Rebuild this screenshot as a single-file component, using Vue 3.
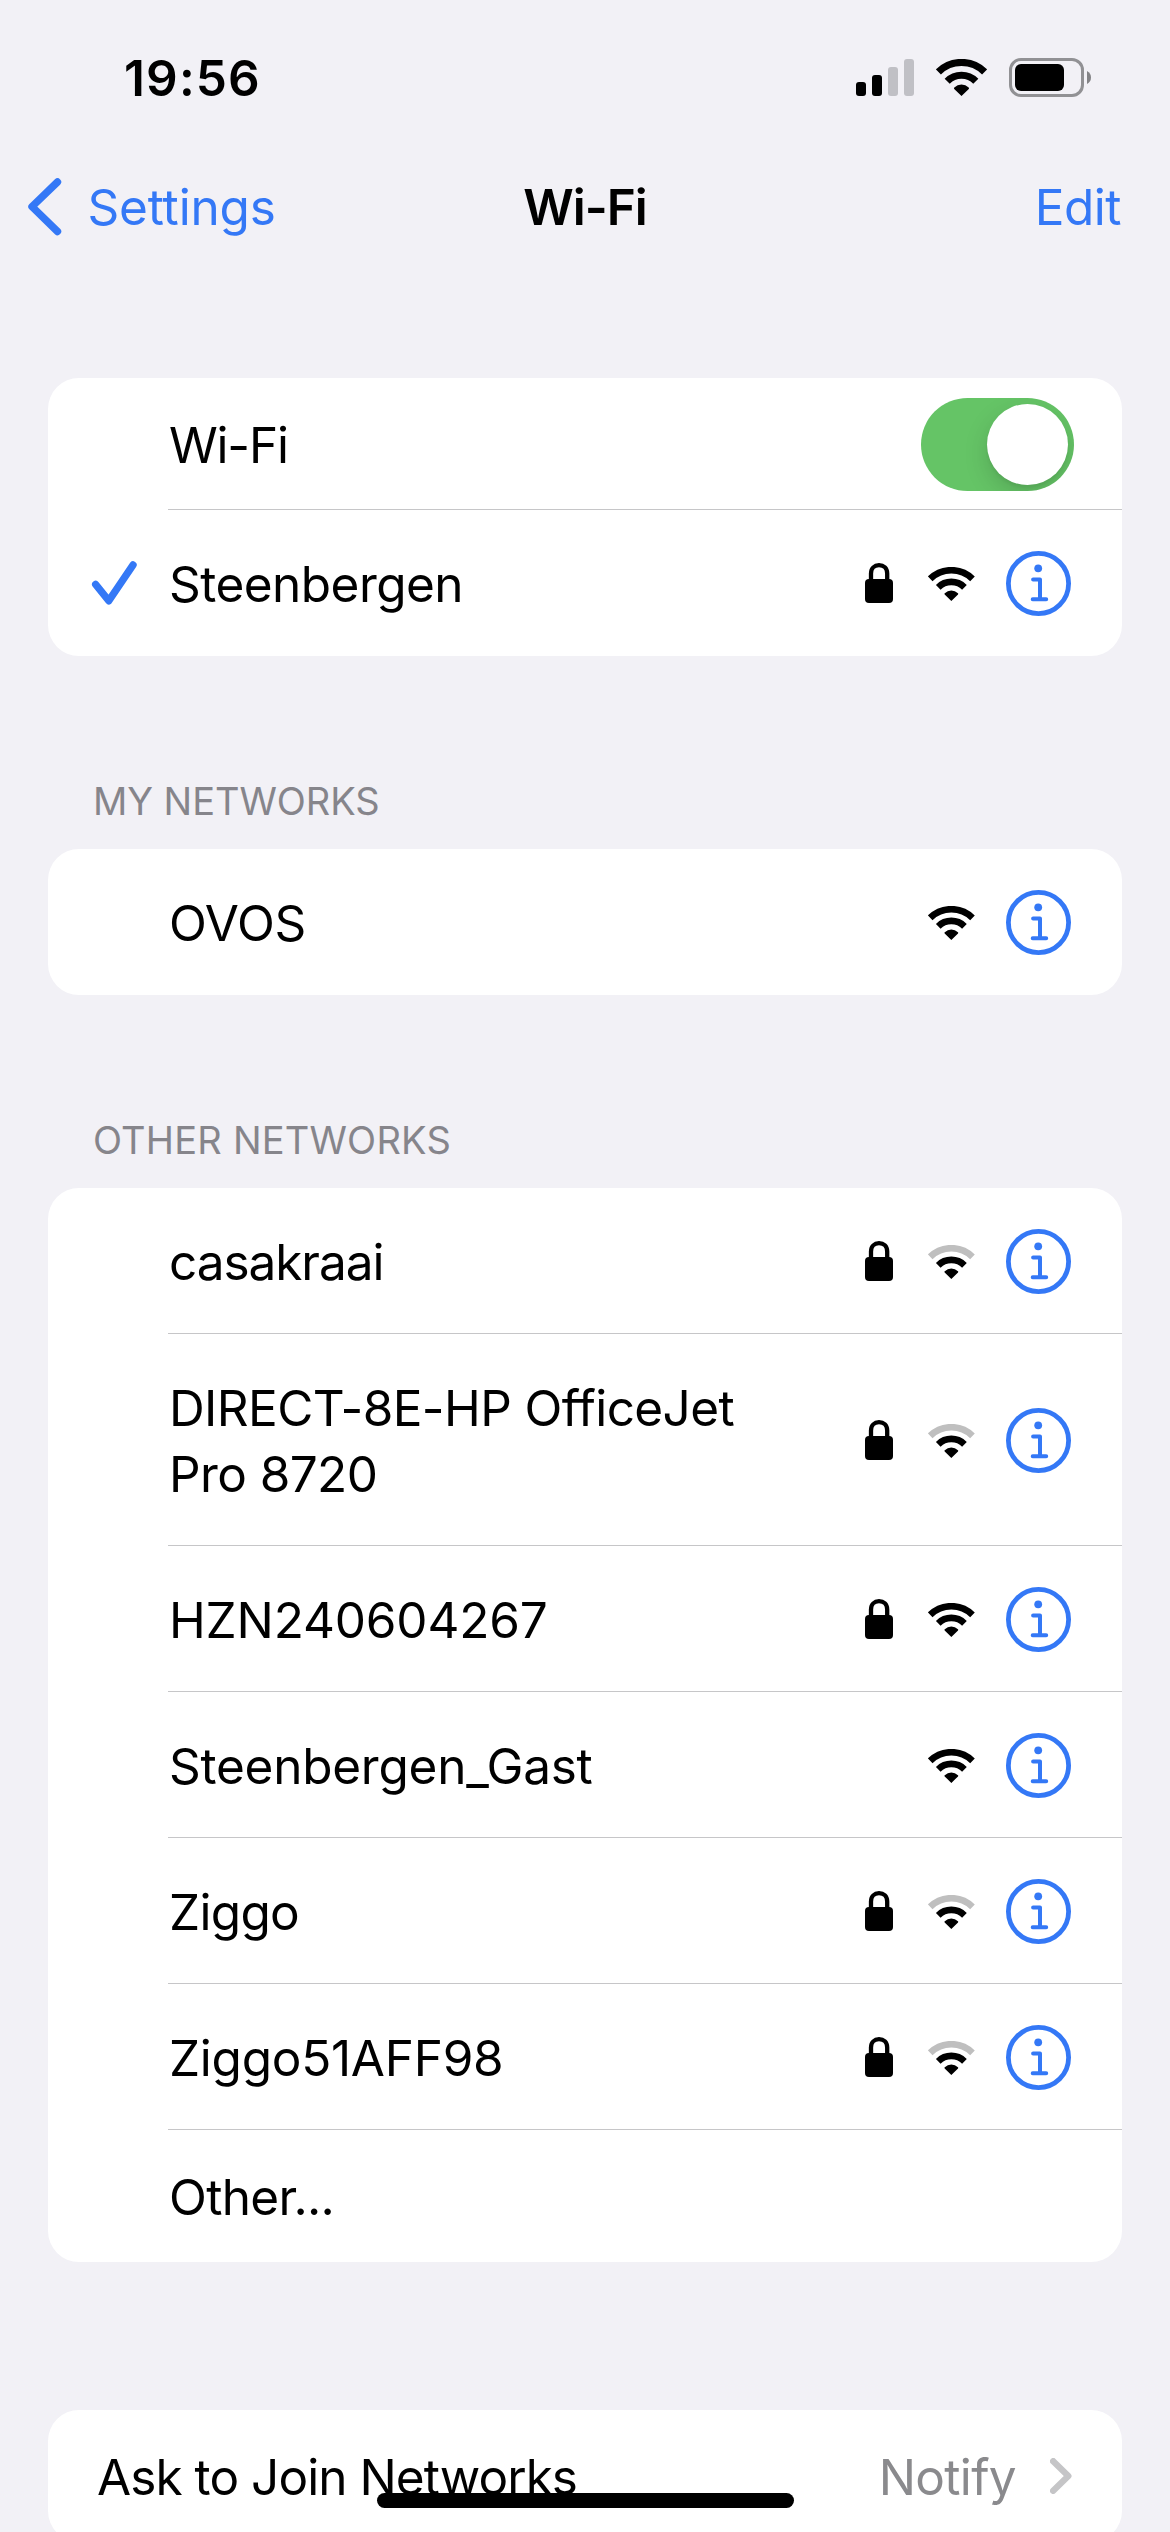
<script setup>
import { h } from 'vue'

// Arcs share one centre at the bottom tip of the fan.
const WifiIcon = (props) =>
  h('svg', { viewBox: '0 0 51 37', width: '100%', height: '100%', 'aria-hidden': 'true' }, [
    h('path', {
      d: 'M2.4 12.9A33 33 0 0 1 48.6 12.9',
      fill: 'none',
      stroke: props.weak ? '#bfbfbf' : '#000',
      'stroke-width': 7.2,
    }),
    h('path', { d: 'M11.2 22.2A20.2 20.2 0 0 1 39.8 22.2', fill: 'none', stroke: '#000', 'stroke-width': 7.2 }),
    h('path', { d: 'M25.5 37L18.2 29.9Q17.6 29.2 18.3 28.6Q21.4 25.6 25.5 25.6T32.7 28.6Q33.4 29.2 32.8 29.9Z', fill: '#000' }),
  ])
WifiIcon.props = ['weak']

const groups = [
  {
    title: '',
    rows: [
      { name: 'Wi-Fi', kind: 'toggle', tracking: -1.2 },
      { name: 'Steenbergen', kind: 'network', checked: true, locked: true, tracking: -0.53 },
    ],
  },
  {
    title: 'MY NETWORKS',
    titleTracking: -0.06,
    rows: [{ name: 'OVOS', kind: 'network', tracking: -0.37 }],
  },
  {
    title: 'OTHER NETWORKS',
    titleTracking: 0.2,
    rows: [
      { name: 'casakraai', kind: 'network', locked: true, weak: true, tracking: -1.06 },
      { name: 'DIRECT-8E-HP OfficeJet Pro 8720', kind: 'network', locked: true, weak: true, tall: true, tracking: -0.6 },
      { name: 'HZN240604267', kind: 'network', locked: true, tracking: -0.17 },
      { name: 'Steenbergen_Gast', kind: 'network', tracking: -0.25 },
      { name: 'Ziggo', kind: 'network', locked: true, weak: true, tracking: -0.7 },
      { name: 'Ziggo51AFF98', kind: 'network', locked: true, weak: true, tracking: -0.27 },
      { name: 'Other...', kind: 'other', tracking: -0.66 },
    ],
  },
]
</script>

<template>
  <div class="screen">
    <header class="status">
      <span class="time">19:56</span>
      <div class="status-icons">
        <svg class="signal" viewBox="0 0 58 37">
          <rect x="0" y="23" width="10" height="14" rx="3" />
          <rect x="16" y="16" width="10" height="21" rx="3" />
          <rect x="32" y="8" width="10" height="29" rx="3" fill="#c0c0c5" />
          <rect x="48" y="0" width="10" height="37" rx="3" fill="#c0c0c5" />
        </svg>
        <span class="status-wifi"><WifiIcon /></span>
        <svg class="battery" viewBox="0 0 82 39">
          <rect x="1.5" y="1.5" width="72" height="36" rx="10.5" fill="none" stroke="#919194" stroke-width="3" />
          <rect x="6" y="6" width="49" height="27" rx="6" />
          <path d="M78 13Q82 15.2 82 19.5T78 26Z" fill="#838386" />
        </svg>
      </div>
    </header>

    <nav class="navbar">
      <a class="back">
        <svg class="back-icon" viewBox="0 0 34 58">
          <path d="M29.5 4L4 28.700L29.5 53.500" />
        </svg>
        <span class="back-label">Settings</span>
      </a>
      <h1 class="title">Wi-Fi</h1>
      <a class="edit">Edit</a>
    </nav>

    <main class="content">
      <section v-for="(group, g) in groups" :key="g" class="group">
        <h2 v-if="group.title" class="group-title" :style="{ letterSpacing: group.titleTracking + 'px' }">{{ group.title }}</h2>
        <div class="card">
          <div v-for="row in group.rows" :key="row.name" class="row" :class="[row.kind, { tall: row.tall }]">
            <div class="lead">
              <svg v-if="row.checked" class="check" viewBox="0 0 46 44">
                <path d="M4.7 23.5L17.8 39.8L42 4" />
              </svg>
            </div>
            <div class="body">
              <span class="name" :style="{ letterSpacing: row.tracking + 'px' }">{{ row.name }}</span>
              <div v-if="row.kind === 'toggle'" class="switch"><div class="knob"></div></div>
              <div v-else-if="row.kind === 'network'" class="icons">
                <svg v-if="row.locked" class="lock" viewBox="0 0 28 40">
                  <path d="M6 18V10.5C6 5.3 9.4 2.2 14 2.2S22.2 5.3 22.2 10.5V18" fill="none" stroke="#000" stroke-width="4.3" />
                  <rect x="0" y="16" width="28" height="24" rx="4" />
                </svg>
                <span class="wifi"><WifiIcon :weak="row.weak" /></span>
                <svg class="info" viewBox="0 0 65 65">
                  <circle cx="32.5" cy="32.5" r="30.1" class="line" stroke-width="4.8" />
                  <circle cx="32.2" cy="17.3" r="3.9" fill="#3478f6" />
                  <path d="M27.1 28.4H34V48.3M26.7 48.3H40.2" class="line" stroke-width="4" />
                </svg>
              </div>
            </div>
          </div>
        </div>
      </section>

      <section class="group last">
        <div class="card">
          <div class="ask">
            <span class="ask-label">Ask to Join Networks</span>
            <span class="ask-value">Notify</span>
            <svg class="chevron" viewBox="0 0 22 36">
              <path d="M3.2 3.2L18.3 18L3.2 32.8" />
            </svg>
          </div>
        </div>
      </section>
    </main>

    <div class="home-indicator"></div>
  </div>
</template>

<style>
body {
  margin: 0;
  background: #f2f1f6;
}
</style>

<style scoped>
.screen {
  position: relative;
  display: flex;
  flex-direction: column;
  width: 1170px;
  height: 2532px;
  overflow: hidden;
  background: #f2f1f6;
  color: #000;
  font-family: Inter, "Liberation Sans", sans-serif;
  font-size: 49.5px;
  line-height: 66px;
}
svg {
  display: block;
  flex: none;
}
.status {
  display: flex;
  flex: none;
  align-items: center;
  justify-content: space-between;
  box-sizing: border-box;
  height: 156px;
  padding: 0 79px 0 124px;
}
.time {
  font-weight: 600;
  letter-spacing: 1.15px;
}
.status-icons {
  display: flex;
  align-items: center;
  margin-bottom: 1px;
}
.signal {
  width: 58px;
  height: 37px;
}
.status-wifi {
  width: 51px;
  height: 37px;
  margin: 0 22px;
}
.battery {
  width: 82px;
  height: 39px;
}
.navbar {
  display: grid;
  flex: none;
  grid-template-columns: 1fr auto 1fr;
  align-items: center;
  height: 102px;
  padding: 0 49px;
  color: #3478f6;
}
.back {
  display: flex;
  align-items: center;
  margin-left: -21px;
}
.back-icon {
  width: 34px;
  height: 58px;
}
.back-icon path {
  fill: none;
  stroke: #3478f6;
  stroke-width: 7.4;
  stroke-linecap: round;
  stroke-linejoin: round;
}
.back-label {
  padding-left: 25.5px;
  letter-spacing: -0.16px;
}
.title {
  margin: 0;
  color: #000;
  font-size: 49.5px;
  font-weight: 600;
  letter-spacing: -1px;
}
.edit {
  justify-self: end;
  letter-spacing: -0.5px;
}
.content {
  display: flex;
  flex-direction: column;
  padding: 120px 48px 0;
}
.group + .group {
  padding-top: 112px;
}
.group-title {
  height: 66px;
  margin: 0;
  padding: 0 0 15px 45px;
  color: #86858b;
  font-size: 38px;
  font-weight: 400;
  line-height: 66px;
}
.group + .group.last {
  padding-top: 148px;
}
.card {
  overflow: hidden;
  border-radius: 31px;
  background: #fff;
}
.row {
  display: flex;
  height: 146px;
}
.row.toggle,
.row.other {
  height: 132px;
}
.row.tall {
  height: 212px;
}
.lead {
  display: flex;
  flex: none;
  align-items: center;
  box-sizing: border-box;
  width: 120px;
  padding-left: 43px;
}
.check {
  width: 46px;
  height: 44px;
  margin-bottom: 1px;
}
.check path {
  fill: none;
  stroke: #3478f6;
  stroke-width: 7.4;
  stroke-linecap: round;
  stroke-linejoin: round;
}
.body {
  display: flex;
  flex: 1;
  align-items: center;
  justify-content: space-between;
  box-sizing: border-box;
  padding: 1px 51px 0 1px;
  border-bottom: 1px solid #c6c6c8;
}
.row:last-child .body {
  border-bottom-color: transparent;
}
.toggle .body {
  padding-right: 48px;
}
.name {
  max-width: 600px;
  padding-top: 2px;
}
.switch {
  display: flex;
  justify-content: flex-end;
  box-sizing: border-box;
  width: 153px;
  height: 93px;
  margin-top: 1px;
  padding: 6px;
  overflow: hidden;
  border-radius: 47px;
  background: #65c466;
}
.knob {
  width: 81px;
  height: 81px;
  border-radius: 50%;
  background: #fff;
  box-shadow: 0 9px 24px rgba(0, 0, 0, 0.15), 0 3px 3px rgba(0, 0, 0, 0.05);
}
.icons {
  display: flex;
  align-items: center;
  margin-top: 1px;
}
.lock {
  width: 28px;
  height: 40px;
  margin: 0 35px 1px 0;
}
.wifi {
  width: 46.7px;
  height: 33.9px;
  margin: 1px 31.3px 0 0;
}
.info {
  width: 65px;
  height: 65px;
}
.info .line {
  fill: none;
  stroke: #3478f6;
  stroke-linecap: round;
  stroke-linejoin: round;
}
.ask {
  display: flex;
  align-items: center;
  height: 132px;
  padding: 0 50px 0 49px;
}
.ask-label {
  flex: 1;
  padding-top: 2px;
  letter-spacing: -0.94px;
}
.ask-value {
  padding-top: 2px;
  color: #8a8a8d;
  letter-spacing: -0.66px;
}
.chevron {
  width: 22px;
  height: 36px;
  margin-left: 34px;
}
.chevron path {
  fill: none;
  stroke: #c5c5c7;
  stroke-width: 6.4;
  stroke-linecap: round;
  stroke-linejoin: round;
}
.home-indicator {
  position: absolute;
  bottom: 24px;
  left: 377px;
  width: 417px;
  height: 15px;
  border-radius: 8px;
  background: #000;
}
</style>
